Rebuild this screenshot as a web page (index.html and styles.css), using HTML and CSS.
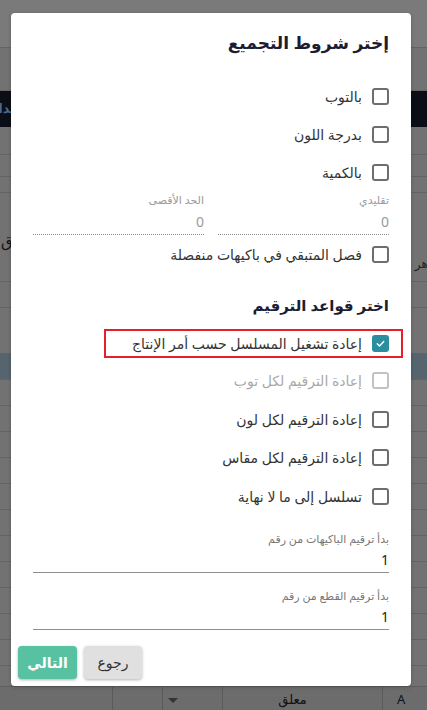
FILE: index.html
```html
<!DOCTYPE html>
<html lang="ar">
<head>
<meta charset="utf-8">
<title>Dialog</title>
<link rel="stylesheet" href="styles.css">
</head>
<body>
<div class="page">
  <div class="bg-row h47 light"></div>
  <div class="bg-row h43"></div>
  <div class="bg-dark"><span class="bg-dark-text">الاعدادات</span></div>
  <div class="bg-row h28"></div>
  <div class="bg-row h22"></div>
  <div class="bg-row h16"></div>
  <div class="bg-row h89"><span class="bg-letter">ق</span><span class="bg-right-text">ظاهر</span></div>
  <div class="bg-row h26"></div>
  <div class="bg-row h46"></div>
  <div class="bg-row h26 bg-blue"></div>
  <div class="bg-row h26"></div>
  <div class="bg-row h26"></div>
  <div class="bg-row h26"></div>
  <div class="bg-row h26"></div>
  <div class="bg-row h26"></div>
  <div class="bg-row h26"></div>
  <div class="bg-row h26"></div>
  <div class="bg-row h26"></div>
  <div class="bg-row h26"></div>
  <div class="bg-row h26"></div>
  <div class="bg-row h26"></div>
  <div class="bg-row h26"></div>
  <div class="bg-table">
    <div class="cell c1"></div>
    <div class="cell c2"></div>
    <div class="cell c3"><span class="cell-arrow"></span></div>
    <div class="cell c4">معلق</div>
    <div class="cell c5">A</div>
  </div>
</div>

<div class="dialog" dir="rtl">
  <h2 class="title">إختر شروط التجميع</h2>

  <div class="options">
    <label class="row"><span class="box"></span><span class="text">بالتوب</span></label>
    <label class="row"><span class="box"></span><span class="text">بدرجة اللون</span></label>
    <label class="row"><span class="box"></span><span class="text">بالكمية</span></label>
  </div>

  <div class="pair">
    <div class="field dotted">
      <div class="flabel">تقليدي</div>
      <div class="fvalue muted">0</div>
    </div>
    <div class="field dotted">
      <div class="flabel">الحد الأقصى</div>
      <div class="fvalue muted">0</div>
    </div>
  </div>

  <label class="row"><span class="box"></span><span class="text">فصل المتبقي في باكيهات منفصلة</span></label>

  <h3 class="subtitle">اختر قواعد الترقيم</h3>

  <div class="options">
    <div class="row">
      <span class="highlight"><span class="box checked"><svg viewBox="0 0 16 16" width="16" height="16"><path d="M4 8.3 L6.8 11 L12 5.6" fill="none" stroke="#fff" stroke-width="1.8" stroke-linecap="round" stroke-linejoin="round"/></svg></span><span class="text">إعادة تشغيل المسلسل حسب أمر الإنتاج</span></span>
    </div>
    <label class="row disabled"><span class="box"></span><span class="text">إعادة الترقيم لكل توب</span></label>
    <label class="row"><span class="box"></span><span class="text">إعادة الترقيم لكل لون</span></label>
    <label class="row"><span class="box"></span><span class="text">إعادة الترقيم لكل مقاس</span></label>
    <label class="row"><span class="box"></span><span class="text">تسلسل إلى ما لا نهاية</span></label>
  </div>

  <div class="field solid first">
    <div class="flabel">بدأ ترقيم الباكيهات من رقم</div>
    <div class="fvalue">1</div>
  </div>
  <div class="field solid second">
    <div class="flabel">بدأ ترقيم القطع من رقم</div>
    <div class="fvalue">1</div>
  </div>

  <div class="footer">
    <button class="btn btn-back">رجوع</button>
    <button class="btn btn-next">التالي</button>
  </div>
</div>
</body>
</html>
```

FILE: styles.css
```css
* { box-sizing: border-box; }
html, body { margin: 0; padding: 0; }
body {
  width: 427px;
  height: 710px;
  overflow: hidden;
  background: #737373;
  font-family: "Noto Sans", "DejaVu Sans", sans-serif;
}

/* dimmed page behind the dialog */
.page { width: 427px; height: 710px; position: relative; overflow: hidden; }
.bg-row { background: #727272; border-bottom: 1px solid #646464; position: relative; }
.light { background: #7a7a7a; }
.h16 { height: 16px; }
.h22 { height: 22px; }
.h26 { height: 26px; }
.h28 { height: 28px; }
.h43 { height: 43px; }
.h46 { height: 46px; }
.h47 { height: 48px; }
.h89 { height: 89px; }
.bg-dark { height: 36px; background: #0b0e17; position: relative; }
.bg-dark-text { position: absolute; left: -26px; top: 8px; font-size: 13px; font-weight: bold; color: #4a6a90; }
.bg-blue { background: #56646e; }
.bg-letter { position: absolute; left: 1px; top: 38px; font-size: 15px; color: #111; }
.bg-right-text { position: absolute; right: -14px; top: 62px; font-size: 12px; color: #222; }
.bg-table {
  position: absolute; left: 0; right: 0; top: 686px; height: 24px;
  background: #6c6c6c; border-top: 1px solid #5e5e5e;
  display: flex;
}
.cell { height: 24px; border-right: 1px solid #5a5a5a; font-size: 13px; color: #111; line-height: 24px; }
.c1 { width: 113px; }
.c2 { width: 50px; }
.c3 { width: 60px; position: relative; }
.c4 { width: 160px; text-align: center; padding-right: 20px; }
.c5 { flex: 1; border-right: none; padding-left: 14px; }
.cell-arrow { position: absolute; left: 5px; top: 11px; width: 0; height: 0; border-left: 5px solid transparent; border-right: 5px solid transparent; border-top: 5px solid #333; }

/* dialog */
.dialog {
  position: absolute;
  left: 11px;
  top: 13px;
  width: 400px;
  height: 673px;
  background: #fff;
  border-radius: 4px;
  padding: 18px 22px 7px 22px;
  box-shadow: 0 1px 4px rgba(0,0,0,0.2);
  display: flex;
  flex-direction: column;
}
.title {
  margin: 0 0 23px 0;
  font-size: 17px;
  line-height: 24px;
  font-weight: bold;
  color: #1b1d33;
}
.subtitle {
  margin: 19px 0 8px 0;
  font-size: 15px;
  line-height: 24px;
  font-weight: bold;
  color: #1b1d33;
}
.options { display: flex; flex-direction: column; }
.row {
  height: 38.5px;
  display: flex;
  align-items: center;
  gap: 10px;
  font-size: 14px;
  color: #333;
}
.options .row:first-child { height: 37px; }
.box {
  width: 17px;
  height: 17px;
  flex: none;
  border: 2px solid #6e6e6e;
  border-radius: 3px;
  display: flex;
  align-items: center;
  justify-content: center;
}
.box.checked { background: #2a8e9e; border-color: #2a8e9e; }
.box svg { width: 15px; height: 15px; }
.disabled { color: #a9a9a9; }
.disabled .box { border-color: #c2c2c2; }
.highlight {
  display: flex;
  align-items: center;
  gap: 10px;
  height: 29px;
  border: 2px solid #e3202c;
  margin-right: -14px;
  padding-right: 12px;
  padding-left: 26px;
}

.pair { display: flex; gap: 14px; }
.field.dotted { flex: 1; border-bottom: 1px dotted #8a8a8a; padding-bottom: 2px; }
.flabel { font-size: 11px; line-height: 16px; color: #9a9a9a; }
.fvalue { font-size: 14px; line-height: 20px; color: #222; margin-top: 4px; }
.fvalue.muted { color: #9a9a9a; }
.field.solid { border-bottom: 1px solid #8f8f8f; padding-bottom: 2px; }
.field.solid .flabel { color: #777; }
.field.solid .fvalue { margin-top: 3px; }
.field.first { margin-top: 15px; }
.field.second { margin-top: 15px; }

.footer {
  margin-top: auto;
  margin-left: -15px;
  display: flex;
  justify-content: flex-end;
  gap: 7px;
}
.btn {
  height: 33px;
  border: none;
  border-radius: 4px;
  font-family: inherit;
  font-size: 14px;
  box-shadow: 0 1px 3px rgba(0,0,0,0.3);
}
.btn-back { width: 58px; background: #e0e0e0; color: #333; }
.btn-next { width: 59px; background: #57c1a2; color: #fff; font-weight: 600; }
```
